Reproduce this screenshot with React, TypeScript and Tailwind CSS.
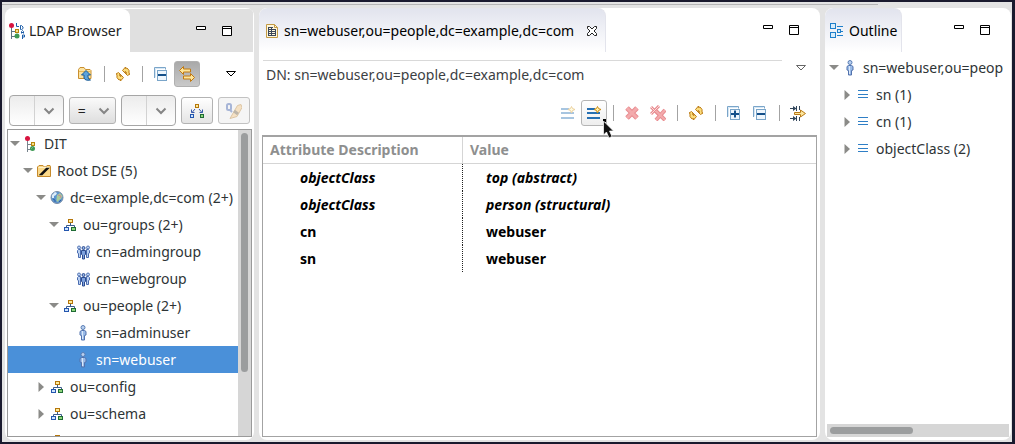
import React from 'react';

type IconProps = { children: React.ReactNode; faded?: boolean };

const Icon: React.FC<IconProps> = ({ children, faded }) => (
  <svg width="16" height="16" viewBox="0 0 16 16" fill="none" aria-hidden="true" className={faded ? 'shrink-0 opacity-40' : 'shrink-0'}>
    {children}
  </svg>
);

const LdapIcon = () => (
  <Icon>
    <path d="M2.500 4v12M2.500 8.500h4M2.500 13.500h4" stroke="#5f7382" />
    <circle cx="2.500" cy="2.500" r="2.500" fill="#d8143f" />
    <rect x="6.500" y="6.500" width="3" height="3" fill="#f5e08c" stroke="#b8860b" />
    <circle cx="8" cy="13" r="2.500" fill="#3f9a55" />
    <path d="M7.500 0v3.500H10M11.500 2.500v4h1l1.500-1v-1.500l-1.500-1.500zM12.500 10.500v-2l1-1 1 1v2M12.500 9.500h2M13.500 16v-4h2v2h-2" stroke="#1f5fa8" />
  </Icon>
);

const DitIcon = () => (
  <Icon>
    <path d="M4.500 4v12M4.500 8.500h4M4.500 13.500h4" stroke="#77838c" />
    <circle cx="4.500" cy="2.500" r="2.500" fill="#d8143f" />
    <rect x="8.500" y="6.500" width="3" height="3" fill="#f5e08c" stroke="#b8860b" />
    <circle cx="9.500" cy="12.500" r="2.500" fill="#3f9a55" />
    <path d="M8.500 12.500l1-1" stroke="#a9dab3" />
  </Icon>
);

const RootIcon = () => (
  <Icon>
    <path d="M1.500 4l1.500-1.500h4L8.500 4h1L11 2.500h3L14.500 4v9.500h-13z" fill="#fbd98a" stroke="#c68a2c" />
    <path d="M2.500 4.500h11" stroke="#fff0c4" />
    <path d="M4.500 11.500h1.500L12 5.500h-1.500z" fill="#111" stroke="#111" strokeWidth="1.500" />
  </Icon>
);

const GlobeIcon = () => (
  <Icon>
    <circle cx="8" cy="7.500" r="6" fill="#5b93cf" stroke="#7b8ea6" />
    <path d="M3 5l3-3 2 1-1 2-2 1v2L3 8z" fill="#dcecf8" />
    <path d="M8 5l3-2 2.500 3-1.500 3-2 1-1 2-1.500-1V8z" fill="#a9cc9a" />
    <path d="M9 5l3 1-1 2" stroke="#c98a9b" />
    <path d="M4 9l2 1v2M10 12l2-2" stroke="#2f63a3" />
  </Icon>
);

const OuIcon = () => (
  <Icon>
    <path d="M8.500 6v3M4.500 11V8.500h8V11" stroke="#3c5d8c" />
    <rect x="6.500" y="2.500" width="4" height="3" fill="#fdeb9a" stroke="#b5760b" />
    <rect x="2.500" y="10.500" width="4" height="3" fill="#cfe4fb" stroke="#2456ae" />
    <rect x="9.500" y="10.500" width="4" height="3" fill="#8fd67c" stroke="#1f6b35" />
  </Icon>
);

const GroupIcon = () => (
  <Icon>
    <circle cx="4" cy="3.500" r="1.500" fill="#b9d0f2" stroke="#5676b4" />
    <circle cx="13" cy="3.500" r="1.500" fill="#b9d0f2" stroke="#5676b4" />
    <path d="M2.500 6.500l1-1h2v8h-2v-4l-1-.5z" fill="#b9d0f2" stroke="#4a6cb0" />
    <path d="M14.500 6.500l-1-1h-2v8h2v-4l1-.5z" fill="#b9d0f2" stroke="#4a6cb0" />
    <circle cx="8.500" cy="4" r="1.500" fill="#8fb0e6" stroke="#2c4c90" />
    <path d="M6.500 6.500h4v4l-1 .5v4h-2v-4l-1-.5z" fill="#7fa3df" stroke="#2c4c90" />
  </Icon>
);

const PersonIcon = () => (
  <Icon>
    <circle cx="8" cy="2.500" r="2" fill="#b8d0ef" stroke="#5a7db4" />
    <path d="M6.500 5.500h3l1.500 1V10l-1.500.5v4.500h-3v-4.500L5 10V6.500z" fill="#9bbce8" stroke="#5272ad" />
    <path d="M7.500 6v8" stroke="#dbe8f9" />
  </Icon>
);

const LinesIcon = () => (
  <Icon>
    <path d="M3 3.500h10M3 7.500h10M3 10.500h10" stroke="#2f7fc6" />
  </Icon>
);

const FolderUpIcon = () => (
  <Icon>
    <path d="M1.500 3.500L3 1.500h4l1.500 2h4.500l1 1v8H1.500z" fill="#fce3a0" stroke="#c98f2f" />
    <path d="M2 5.500h11.500" stroke="#e9b957" />
    <path d="M9 4.500l4.500 4.500H11v2q0 2 2.500 3-5.500 1-6.500-2V9H4.500z" fill="#5ba3dc" stroke="#1b5c97" />
  </Icon>
);

const RefreshIcon = () => (
  <Icon>
    <g fill="#fbdc7b" stroke="#bd7d18" strokeLinejoin="round">
      <path d="M7.500 4.500L10.500 1v1.500l1.500-.5q3 2 2 5.500l1 .5-2.500 1.500-2.500-2.500 1.500.5q0-2-1.500-2l.5 2z" />
      <path d="M8.500 11.500L5.500 15v-1.500l-1.500.5q-3-2-2-5.500L1 8l2.500-1.500L6 9l-1.500-.5q0 2 1.500 2l-.5-2z" />
    </g>
  </Icon>
);

const BoxesIcon: React.FC<{ plus?: boolean }> = ({ plus }) => (
  <Icon>
    <path d="M1.500 12v-10.500h11v2" stroke="#7aa5c9" />
    <path d="M2.500 11.500v-9h9" stroke="#d5e6f4" />
    <rect x="4.500" y="4.500" width="9" height="10" fill="#eef6fd" stroke="#7aa5c9" />
    <path d="M5 9h8" stroke="#14508a" strokeWidth="2" />
    {plus && <path d="M9 5.500v7" stroke="#14508a" strokeWidth="2" />}
  </Icon>
);

const LinkIcon = () => (
  <Icon>
    <g fill="#fde59a" stroke="#c1780f">
      <path d="M.5 4.500l4-4v2.500h7v3h-7v2.500z" />
      <path d="M15.500 11.500l-4-4V10h-7v3h7v2.500z" />
    </g>
  </Icon>
);

const FilterTreeIcon = () => (
  <Icon>
    <path d="M6 6L3 9.500M2.500 6.500v3h3M10 6l3 3.500M13.500 6.500v3h-3" stroke="#3558ab" />
    <rect x="6.500" y="1.500" width="3" height="3" fill="#fdeb9a" stroke="#b5760b" />
    <rect x="1.500" y="11.500" width="3" height="3" fill="#cfe4fb" stroke="#2456ae" />
    <rect x="11.500" y="11.500" width="3" height="3" fill="#8fd67c" stroke="#1f6b35" />
  </Icon>
);

const QuickSearchIcon = () => (
  <Icon faded>
    <path d="M6 12l5.500-9.500 3.500-1 1 3-5 9-7 2z" fill="#f6c47c" stroke="#b9802f" />
    <path d="M8 8l4 3" stroke="#6d5a3c" strokeWidth="3" />
    <rect x="1" y="1" width="4" height="6" rx="1.500" stroke="#3558ab" strokeWidth="2" />
    <path d="M4 7l2 2" stroke="#3558ab" strokeWidth="2" />
  </Icon>
);

const AddValueIcon: React.FC<{ faded?: boolean }> = ({ faded }) => (
  <Icon faded={faded}>
    <path d="M1 4h8M1 8h13M1 13h13" stroke="#2670b3" strokeWidth="2" />
    <path d="M11.500 1.500l1 2 2.500 1-2.500 1-1 2.500-1-2.500-2.500-1 2.500-1z" fill="#fff3b0" stroke="#cf8d12" />
  </Icon>
);

const DeleteIcon = () => (
  <Icon>
    <path d="M3 3l10 10M13 3L3 13" stroke="#e88c90" strokeWidth="5" />
    <path d="M3 3l10 10M13 3L3 13" stroke="#f3aaac" strokeWidth="3" />
  </Icon>
);

const DeleteAllIcon = () => (
  <Icon>
    <path d="M1 2l8 8M9 1L1 9" stroke="#e88c90" strokeWidth="3" />
    <path d="M1 2l8 8M9 1L1 9" stroke="#fbdcdc" />
    <path d="M6 6l9 9M15 5l-9 10" stroke="#e88c90" strokeWidth="4" />
    <path d="M6 6l9 9M15 5l-9 10" stroke="#f3aaac" strokeWidth="2" />
  </Icon>
);

const ExpandColumnsIcon = () => (
  <Icon>
    <path d="M0 3.500h5M0 13.500h5M6.500 1v5M6.500 11v5M9.500 1v4M9.500 12v4" stroke="#33475c" />
    <path d="M3 1l3.500 2.500L3 6zM3 11l3.500 2.500L3 16z" fill="#33475c" />
    <path d="M4.500 7.500h6V5l5 3.500-5 3.500V9.500h-6z" fill="#fde59a" stroke="#b97a18" />
  </Icon>
);

const EntryEditorIcon = () => (
  <Icon>
    <path d="M2.500 1.500h8l3 3v10h-11z" fill="#fff7dc" stroke="#c39a45" />
    <path d="M10.500 1.500v3h3" stroke="#c39a45" />
    <path d="M4 4.500h5M4 6.500h8M4 8.500h8M4 10.500h8M4 12.500h8M4.500 4v9M7.500 4v9M11.500 6v7" stroke="#3b4658" />
  </Icon>
);

const OutlineIcon = () => (
  <Icon>
    <g stroke="#1f7fca" fill="#d9edfb">
      <rect x="1.500" y=".5" width="5" height="5" />
      <rect x="8.500" y="6.500" width="3" height="3" />
      <rect x="1.500" y="9.500" width="5" height="5" />
      <path d="M8 3.500h6M12 8.500h2M8 12.500h6" />
    </g>
  </Icon>
);

const CloseIcon = () => (
  <svg width="12" height="12" viewBox="0 0 12 12" fill="#fff" stroke="#222" aria-hidden="true">
    <path d="M1.500 1.500h2L6 4l2.500-2.500h2v2L8 6l2.500 2.500v2h-2L6 8l-2.500 2.500h-2v-2L4 6 1.500 3.500z" />
  </svg>
);

const MenuIcon = () => (
  <svg width="12" height="8" viewBox="0 0 12 8" fill="#fff" aria-hidden="true">
    <path d="M1.500 1.500h9L6 6z" stroke="currentColor" />
  </svg>
);

const Chevron = () => (
  <svg width="12" height="8" viewBox="0 0 12 8" fill="none" aria-hidden="true">
    <path d="M1.500 1.500L6 6l4.500-4.500" stroke="#858585" strokeWidth="2" />
  </svg>
);

const Separator = () => (
  <div className="flex w-3 justify-center">
    <div className="h-4 w-px bg-[#a3a3a3]" />
  </div>
);

type ToolProps = { label: string; look?: string; children: React.ReactNode };

const Tool: React.FC<ToolProps> = ({ label, look = '', children }) => (
  <button type="button" aria-label={label} className={`relative flex h-[26px] w-[26px] shrink-0 items-center justify-center rounded-[3px] ${look}`}>
    {children}
  </button>
);

const WindowButtons = () => (
  <div className="ml-auto flex items-center pr-[13px]">
    <Tool label="Minimize">
      <svg width="10" height="10" viewBox="0 0 10 10" fill="#fff" stroke="#000" aria-hidden="true">
        <path d="M.5.500h9v3h-9z" />
      </svg>
    </Tool>
    <Tool label="Maximize">
      <svg width="10" height="10" viewBox="0 0 10 10" fill="#fff" stroke="#000" aria-hidden="true">
        <path d="M.5.500h9v9h-9zM.5 2.500h9" />
      </svg>
    </Tool>
  </div>
);

type Node = {
  label: string;
  level: number;
  icon: React.ReactNode;
  state?: 'open' | 'closed';
  selected?: boolean;
};

const INDENT = ['pl-0', 'pl-[13px]', 'pl-[26px]', 'pl-[39px]', 'pl-[52px]'];

const DIT_NODES: Node[] = [
  { label: 'DIT', level: 0, icon: <DitIcon />, state: 'open' },
  { label: 'Root DSE (5)', level: 1, icon: <RootIcon />, state: 'open' },
  { label: 'dc=example,dc=com (2+)', level: 2, icon: <GlobeIcon />, state: 'open' },
  { label: 'ou=groups (2+)', level: 3, icon: <OuIcon />, state: 'open' },
  { label: 'cn=admingroup', level: 4, icon: <GroupIcon /> },
  { label: 'cn=webgroup', level: 4, icon: <GroupIcon /> },
  { label: 'ou=people (2+)', level: 3, icon: <OuIcon />, state: 'open' },
  { label: 'sn=adminuser', level: 4, icon: <PersonIcon /> },
  { label: 'sn=webuser', level: 4, icon: <PersonIcon />, selected: true },
  { label: 'ou=config', level: 2, icon: <OuIcon />, state: 'closed' },
  { label: 'ou=schema', level: 2, icon: <OuIcon />, state: 'closed' },
  { label: '', level: 2, icon: <OuIcon />, state: 'closed' },
];

const OUTLINE_NODES: Node[] = [
  { label: 'sn=webuser,ou=peop', level: 0, icon: <PersonIcon />, state: 'open' },
  { label: 'sn (1)', level: 1, icon: <LinesIcon />, state: 'closed' },
  { label: 'cn (1)', level: 1, icon: <LinesIcon />, state: 'closed' },
  { label: 'objectClass (2)', level: 1, icon: <LinesIcon />, state: 'closed' },
];

const ATTRIBUTES = [
  { name: 'objectClass', value: 'top (abstract)', required: true },
  { name: 'objectClass', value: 'person (structural)', required: true },
  { name: 'cn', value: 'webuser', required: false },
  { name: 'sn', value: 'webuser', required: false },
];

const Tree: React.FC<{ name: string; nodes: Node[] }> = ({ name, nodes }) => (
  <ul role="tree" aria-label={name} className="min-h-0 min-w-0 flex-1 overflow-hidden">
    {nodes.map((node, i) => (
      <li
        key={i}
        role="treeitem"
        aria-selected={!!node.selected}
        className={`flex h-[27px] items-center whitespace-nowrap ${INDENT[node.level]} ${node.selected ? 'bg-[#4a90d9] text-white' : 'text-[#2e3436]'}`}
      >
        <span className="flex w-[14px] shrink-0 justify-center">
          {node.state && (
            <svg width="10" height="10" viewBox="0 0 10 10" fill="#8b8b88" aria-hidden="true">
              <path d={node.state === 'open' ? 'M0 2h10L5 7z' : 'M2.500 0v10L8 5z'} />
            </svg>
          )}
        </span>
        <span className="flex w-[18px] shrink-0 justify-center">{node.icon}</span>
        <span className="pl-1">{node.label}</span>
      </li>
    ))}
  </ul>
);

const Combo: React.FC<{ label: string }> = ({ label }) => (
  <div className="flex h-[31px] min-w-0 flex-[54] rounded-[4px] border border-[#a6a6a6] bg-linear-to-b from-[#ececec] to-white">
    <input aria-label={label} className="w-6 min-w-0 flex-1 border-r border-[#d2d2d2] outline-none" />
    <button type="button" aria-label={`${label} history`} className="flex w-7 items-center justify-center">
      <Chevron />
    </button>
  </div>
);

const BrowserPanel = () => (
  <section className="flex min-h-0 min-w-0 flex-col overflow-hidden rounded-lg bg-white">
    <div className="flex h-11 shrink-0 border-t border-r border-white bg-[#e0e0e0]">
      <h2 className="flex items-center gap-1 rounded-tr-lg bg-white pr-2 pl-1 text-[#222]">
        <LdapIcon />
        LDAP Browser
      </h2>
      <WindowButtons />
    </div>
    <div className="flex h-[43px] shrink-0 items-center justify-end pr-[10px]">
      <Tool label="Go up"><FolderUpIcon /></Tool>
      <Separator />
      <Tool label="Refresh"><RefreshIcon /></Tool>
      <Separator />
      <Tool label="Collapse all"><BoxesIcon /></Tool>
      <Tool label="Link with editor" look="mr-[18px] border border-[#b0b0b0] bg-linear-to-b from-[#a9a9a9] to-[#c9c9c9]"><LinkIcon /></Tool>
      <Tool label="View menu"><MenuIcon /></Tool>
    </div>
    <div className="flex shrink-0 items-center gap-[5px] px-1 pb-[3px]">
      <Combo label="Attribute" />
      <div className="relative flex h-[27px] min-w-0 flex-[49] items-center">
        <select aria-label="Operator" className="h-full w-full appearance-none rounded-[3px] border border-[#b3b3b3] bg-linear-to-b from-[#fafafa] to-[#dedede] pl-2 text-[#222]">
          <option>=</option>
          <option>!=</option>
        </select>
        <span className="pointer-events-none absolute right-[6px]"><Chevron /></span>
      </div>
      <Combo label="Value" />
      <button type="button" aria-label="Scope" className="flex h-[27px] w-8 shrink-0 items-center justify-center rounded-[3px] border border-[#b3b3b3] bg-linear-to-b from-white to-[#e4e4e4]">
        <FilterTreeIcon />
      </button>
      <button type="button" aria-label="Quick search" disabled className="flex h-[27px] w-8 shrink-0 items-center justify-center rounded-[3px] border border-[#c2c2c2] bg-[#f5f5f5]">
        <QuickSearchIcon />
      </button>
    </div>
    <div className="mr-[2px] mb-[3px] ml-[2px] flex min-h-0 flex-1 border border-[#9a9a9a]">
      <Tree name="LDAP Browser" nodes={DIT_NODES} />
      <div className="w-[13px] shrink-0 bg-[#d6d6d6] px-[3px] pt-[3px]">
        <div className="h-[79%] rounded-full bg-[#9b9d9e]" />
      </div>
    </div>
  </section>
);

const EditorPanel = () => (
  <section className="flex min-h-0 min-w-0 flex-col overflow-hidden rounded-lg bg-white">
    <div className="flex h-11 shrink-0">
      <div className="flex items-center gap-1 rounded-t-lg border-t border-r border-[#e3e4ec] bg-linear-to-b from-[#e2e4ee] to-white pr-[7px] pl-[5px] text-black">
        <EntryEditorIcon />
        <h2>sn=webuser,ou=people,dc=example,dc=com</h2>
        <button type="button" aria-label="Close" className="ml-2">
          <CloseIcon />
        </button>
      </div>
      <WindowButtons />
    </div>
    <div className="flex h-[43px] shrink-0 items-start gap-[9px] pt-2 pr-[9px] pl-1">
      <p className="min-w-0 flex-1 overflow-hidden border-t border-[#d9d9d9] pt-1 pl-[3px] whitespace-nowrap text-[#3c4043]">
        DN: sn=webuser,ou=people,dc=example,dc=com
      </p>
      <button type="button" aria-label="Editor menu" className="flex h-4 w-5 items-center justify-center text-[#666]">
        <MenuIcon />
      </button>
    </div>
    <div className="flex h-10 shrink-0 items-start justify-end pt-[5px] pr-[9px]">
      <Tool label="New attribute"><AddValueIcon faded /></Tool>
      <Tool label="New value" look="border border-[#b5b5b5] bg-linear-to-b from-white to-[#eeeeee]">
        <AddValueIcon />
        {/* mouse pointer with its small badge */}
        <svg width="14" height="20" viewBox="0 0 14 20" className="absolute top-[18px] left-5 z-10" aria-hidden="true">
          <path d="M1 0h3v3H1z" fill="#000" />
          <path d="M1.500 2v14l3-3 2.500 6 3-1.500L7.500 12h4z" fill="#111" stroke="#fff" strokeWidth=".7" />
        </svg>
      </Tool>
      <div className="flex h-[26px] items-center">
        <Separator />
        <Tool label="Delete value"><DeleteIcon /></Tool>
        <Tool label="Delete all values"><DeleteAllIcon /></Tool>
        <Separator />
        <Tool label="Reload attributes"><RefreshIcon /></Tool>
        <Separator />
        <Tool label="Expand all"><BoxesIcon plus /></Tool>
        <Tool label="Collapse all"><BoxesIcon /></Tool>
        <Separator />
        <Tool label="Show decorated values"><ExpandColumnsIcon /></Tool>
      </div>
    </div>
    <div className="mx-[3px] mb-[3px] min-h-0 flex-1 overflow-hidden border border-t-2 border-[#a3a3a3]">
      <table className="w-full border-separate border-spacing-0 text-left font-bold">
        <thead className="text-[#8e8f8f]">
          <tr>
            <th className="h-[27px] w-[200px] border-r border-b border-[#d5d5d5] p-0 pl-[7px]">Attribute Description</th>
            <th className="h-[27px] border-b border-[#d5d5d5] p-0 pl-[7px]">Value</th>
          </tr>
        </thead>
        <tbody className="text-black">
          {ATTRIBUTES.map((attr, i) => (
            <tr key={i} className={attr.required ? 'italic' : ''}>
              <td className="h-[27px] border-r border-dotted border-[#222] p-0 pl-[37px]">{attr.name}</td>
              <td className="h-[27px] p-0 pl-[23px]">{attr.value}</td>
            </tr>
          ))}
        </tbody>
      </table>
    </div>
  </section>
);

const OutlinePanel = () => (
  <section className="flex min-h-0 min-w-0 flex-col overflow-hidden rounded-lg bg-white">
    <div className="flex h-11 shrink-0">
      <h2 className="flex items-center gap-1 rounded-t-lg border-t border-r border-[#e3e4ec] bg-linear-to-b from-[#e2e4ee] to-white px-1 text-black">
        <OutlineIcon />
        Outline
      </h2>
      <WindowButtons />
    </div>
    <div className="flex min-h-0 flex-1 flex-col px-[2px] pt-[2px] pb-[3px]">
      <Tree name="Outline" nodes={OUTLINE_NODES} />
      <div className="h-[13px] shrink-0 bg-[#d6d6d6] p-[3px]">
        <div className="h-[7px] w-[47%] rounded-full bg-[#9b9d9e]" />
      </div>
    </div>
  </section>
);

const App: React.FC = () => {
  return (
    <div className="flex h-screen flex-col border-2 border-r-[3px] border-[#1a1a2e] bg-[#e3e3e3] font-['Noto_Sans','Open_Sans',sans-serif] text-[14px] leading-[20px]">
      <div className="mr-[134px] mb-[3px] h-[3px] shrink-0 border-b border-[#b5b5b5]" />
      <main className="grid min-h-0 flex-1 grid-cols-[minmax(0,249fr)_minmax(0,561fr)_minmax(0,186fr)] grid-rows-[minmax(0,1fr)] gap-[5px] pr-px pb-[2px] pl-[3px]">
        <BrowserPanel />
        <EditorPanel />
        <OutlinePanel />
      </main>
    </div>
  );
};

export default App;
